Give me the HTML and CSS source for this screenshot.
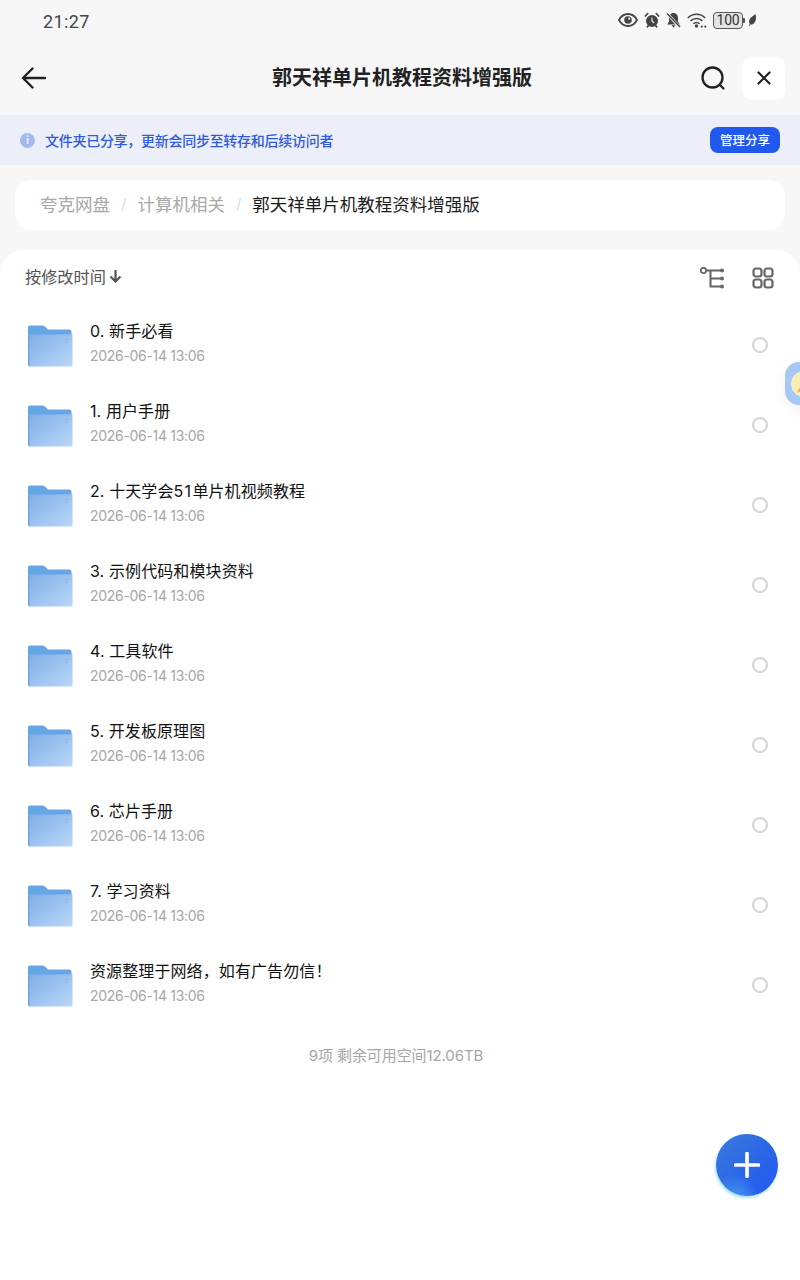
FILE: index.html
```html
<!DOCTYPE html>
<html lang="zh">
<head>
<meta charset="utf-8">
<title>郭天祥单片机教程资料增强版</title>
<link rel="stylesheet" href="styles.css">
</head>
<body>
<div class="app">
  <svg width="0" height="0" class="defs" aria-hidden="true">
    <defs>
      <linearGradient id="fb" x1="0" y1="0" x2="1" y2="1">
        <stop offset="0" stop-color="#7eaee6"/>
        <stop offset="1" stop-color="#bad7f9"/>
      </linearGradient>
      <symbol id="folder" viewBox="0 0 46 44">
        <path d="M1 4.500a2 2 0 0 1 2-2h12c1.500 0 2.500.5 3.500 1.500L21 6.500h21a2.500 2.500 0 0 1 2.500 2.500v6H1z" fill="#66a6e6"/>
        <path d="M38.500 8h2.500M38.500 10h2.500" stroke="#8fa9c6" stroke-width=".8" fill="none"/>
        <path d="M1 11.500h44.500V42a1.500 1.500 0 0 1-1.500 1.500H3A2 2 0 0 1 1 41.500z" fill="url(#fb)"/>
        <path d="M1 11.500h1.500v32H3a2 2 0 0 1-2-2z" fill="#6ea3df"/>
        <path d="M38 17h3M38 19.500h3" stroke="#8fb0d6" stroke-width=".8"/>
      </symbol>
    </defs>
  </svg>

  <header class="status">
    <span class="time">21:27</span>
    <div class="status-icons">
      <svg width="20" height="14" viewBox="0 0 20 14"><path d="M1 7c2-3.800 5.300-6 9-6s7 2.200 9 6c-2 3.800-5.300 6-9 6S3 10.800 1 7z" fill="none" stroke="#444" stroke-width="1.800"/><circle cx="10" cy="7" r="3.800" fill="#444"/><circle cx="11.300" cy="5.700" r="1.100" fill="#f7f7f7"/></svg>
      <svg width="16" height="16" viewBox="0 0 16 16"><circle cx="8" cy="9" r="6" fill="#444"/><path d="M8 5.500v3.700l2.200 1.500" stroke="#f7f7f7" stroke-width="1.100" fill="none"/><path d="M.8 4.500L4.200 1M15.200 4.500L11.800 1M2.800 15.300l1.700-1.700M13.200 15.300l-1.700-1.700" stroke="#444" stroke-width="1.700"/></svg>
      <svg width="15" height="16" viewBox="0 0 15 16"><path d="M7.500 1C4.500 1 3 3.500 3 6v3.500L1.200 12.500h12.600L12 9.500V6c0-2.500-1.500-5-4.500-5z" fill="#444"/><path d="M5.500 13.300h4L7.500 15.500z" fill="#444"/><path d="M1.500 2l12 13" stroke="#f7f7f7" stroke-width="2.800"/><path d="M1 1.500l13 13.500" stroke="#444" stroke-width="1.400"/></svg>
      <svg width="20" height="15" viewBox="0 0 20 15"><path d="M.8 5C3 2.800 6.100 1.300 9.500 1.300S16 2.800 18.200 5M3.600 7.900c1.500-1.500 3.600-2.500 5.900-2.500s4.400 1 5.900 2.500M6.400 10.700c.8-.8 1.900-1.300 3.100-1.300s2.300.5 3.100 1.300" fill="none" stroke="#444" stroke-width="1.500"/><circle cx="9.500" cy="13" r="1.700" fill="#444"/><circle cx="14.800" cy="13.600" r="1.100" fill="#444"/><circle cx="18.300" cy="13.600" r="1.100" fill="#444"/></svg>
      <span class="battery"><span class="battery-level">100</span></span>
      <span class="battery-tip"></span>
      <svg width="9" height="14" viewBox="0 0 9 13" class="leaf"><path d="M7.500.5c.8 3.500.8 6.500-1 8.800-1.200 1.500-2.700 2-4 1.700L1.500 12.500l-.7-.4 1-1.600C.3 8.300 1 5.500 3.500 3.500 5 2.400 6.500 1.500 7.500.5z" fill="#444"/></svg>
    </div>
  </header>

  <nav class="topbar">
    <button class="icon-btn back" aria-label="返回">
      <svg width="26" height="22" viewBox="0 0 26 22"><path d="M11.500 1.500L2 11l9.500 9.500M2.500 11H24" fill="none" stroke="#222" stroke-width="2.400" stroke-linecap="round" stroke-linejoin="round"/></svg>
    </button>
    <h1 class="title">郭天祥单片机教程资料增强版</h1>
    <div class="top-actions">
      <button class="icon-btn" aria-label="搜索">
        <svg width="26" height="26" viewBox="0 0 26 26"><circle cx="12.500" cy="12.500" r="10" fill="none" stroke="#222" stroke-width="2.300"/><path d="M20 20l3.500 3.500" stroke="#222" stroke-width="2.300" stroke-linecap="round"/></svg>
      </button>
      <button class="close-btn" aria-label="关闭">
        <svg width="14" height="14" viewBox="0 0 14 14"><path d="M1.500 1.500l11 11M12.500 1.500l-11 11" stroke="#222" stroke-width="2.200" stroke-linecap="round"/></svg>
      </button>
    </div>
  </nav>

  <section class="banner">
    <div class="banner-msg">
      <span class="info">i</span>
      <span class="banner-text">文件夹已分享，更新会同步至转存和后续访问者</span>
    </div>
    <button class="manage">管理分享</button>
  </section>

  <div class="crumbs">
    <span class="crumb">夸克网盘</span><span class="sep">/</span>
    <span class="crumb">计算机相关</span><span class="sep">/</span>
    <span class="crumb current">郭天祥单片机教程资料增强版</span>
  </div>

  <main class="panel">
    <div class="sortbar">
      <div class="sort">按修改时间
        <svg width="13" height="14" viewBox="0 0 13 14"><path d="M6.500 1v11M1.500 7.500l5 5 5-5" fill="none" stroke="#555" stroke-width="2.200"/></svg>
      </div>
      <div class="view-tools">
        <svg width="25" height="22" viewBox="0 0 25 22"><circle cx="3.500" cy="3.500" r="2.700" fill="none" stroke="#666" stroke-width="1.800"/><path d="M6.500 3.500H22M10.500 3.500v16H22M10.500 11.500H22" fill="none" stroke="#666" stroke-width="2.100"/><circle cx="22" cy="3.500" r="2" fill="#666"/><circle cx="22" cy="11.500" r="2" fill="#666"/><circle cx="22" cy="19.500" r="2" fill="#666"/></svg>
        <svg width="22" height="22" viewBox="0 0 22 22" class="grid-ic"><g fill="none" stroke="#666" stroke-width="2.200"><rect x="1.500" y="1.500" width="8" height="8" rx="2.500"/><rect x="12.500" y="1.500" width="8" height="8" rx="2.500"/><rect x="1.500" y="12.500" width="8" height="8" rx="2.500"/><rect x="12.500" y="12.500" width="8" height="8" rx="2.500"/></g></svg>
      </div>
    </div>

    <ul class="files">
      <li class="file"><svg class="folder"><use href="#folder"/></svg><div class="meta"><div class="name">0. 新手必看</div><div class="date">2026-06-14 13:06</div></div><span class="radio"></span></li>
      <li class="file"><svg class="folder"><use href="#folder"/></svg><div class="meta"><div class="name">1. 用户手册</div><div class="date">2026-06-14 13:06</div></div><span class="radio"></span></li>
      <li class="file"><svg class="folder"><use href="#folder"/></svg><div class="meta"><div class="name">2. 十天学会<span class="digits">51</span>单片机视频教程</div><div class="date">2026-06-14 13:06</div></div><span class="radio"></span></li>
      <li class="file"><svg class="folder"><use href="#folder"/></svg><div class="meta"><div class="name">3. 示例代码和模块资料</div><div class="date">2026-06-14 13:06</div></div><span class="radio"></span></li>
      <li class="file"><svg class="folder"><use href="#folder"/></svg><div class="meta"><div class="name">4. 工具软件</div><div class="date">2026-06-14 13:06</div></div><span class="radio"></span></li>
      <li class="file"><svg class="folder"><use href="#folder"/></svg><div class="meta"><div class="name">5. 开发板原理图</div><div class="date">2026-06-14 13:06</div></div><span class="radio"></span></li>
      <li class="file"><svg class="folder"><use href="#folder"/></svg><div class="meta"><div class="name">6. 芯片手册</div><div class="date">2026-06-14 13:06</div></div><span class="radio"></span></li>
      <li class="file"><svg class="folder"><use href="#folder"/></svg><div class="meta"><div class="name">7. 学习资料</div><div class="date">2026-06-14 13:06</div></div><span class="radio"></span></li>
      <li class="file"><svg class="folder"><use href="#folder"/></svg><div class="meta"><div class="name">资源整理于网络，如有广告勿信！</div><div class="date">2026-06-14 13:06</div></div><span class="radio"></span></li>
    </ul>
    <p class="summary">9项 剩余可用空间12.06TB</p>
  </main>

  <aside class="float-tab">
    <span class="float-badge">
      <svg width="26" height="26" viewBox="0 0 26 26"><path d="M17 6L7 18l-1.500 3.500L9 20 19 8z" fill="#e8b94a"/></svg>
    </span>
  </aside>
  <button class="fab" aria-label="新建">
    <svg width="26" height="26" viewBox="0 0 26 26"><path d="M13 1.500v23M1.500 13h23" stroke="#fff" stroke-width="3.600" stroke-linecap="round"/></svg>
  </button>
</div>
</body>
</html>
```
FILE: styles.css
```css
* { box-sizing: border-box; }
html, body { margin: 0; padding: 0; }
body {
  width: 800px;
  height: 1280px;
  overflow: hidden;
  background: #f7f7f7;
  font-family: Inter, "Noto Sans CJK SC", sans-serif;
  color: #222;
}
.app { position: relative; width: 800px; height: 1280px; overflow: hidden; display: flex; flex-direction: column; }
.defs { position: absolute; }
button { border: 0; background: none; padding: 0; font: inherit; display: flex; align-items: center; justify-content: center; }

.status { height: 42px; padding: 0 43px; display: flex; align-items: center; justify-content: space-between; }
.time { font-family: Roboto, sans-serif; font-size: 18px; color: #444; letter-spacing: .4px; }
.status-icons { display: flex; align-items: center; gap: 6px; padding-bottom: 2px; }
.battery { width: 30px; height: 17px; border: 1.500px solid #555; border-radius: 4px; display: flex; align-items: center; justify-content: center; background: #e4e4e4; }
.battery-level { font-family: Roboto, sans-serif; font-size: 14px; line-height: 1; color: #333; letter-spacing: -.2px; }
.battery-tip { width: 2px; height: 5px; background: #555; margin-left: -6px; border-radius: 0 1px 1px 0; }
.leaf { margin-left: -3px; }

.topbar { height: 72px; padding: 0 15px 0 21px; display: flex; align-items: center; justify-content: space-between; position: relative; }
.title { position: absolute; left: 4px; right: 0; margin: 0; text-align: center; font-size: 20px; font-weight: 700; color: #222; line-height: 28px; pointer-events: none; }
.top-actions { display: flex; align-items: center; gap: 16px; }
.close-btn { width: 43px; height: 43px; border-radius: 10px; background: #fff; }

.banner { height: 50px; margin-top: 1px; padding: 0 20px; background: #eceff7; display: flex; align-items: center; justify-content: space-between; }
.banner-msg { display: flex; align-items: center; gap: 10px; font-size: 14px; font-weight: 500; color: #2f5bdc; }
.banner-text { letter-spacing: -.28px; padding-bottom: 1px; }
.info { width: 15px; height: 15px; border-radius: 50%; background: #a3b8f0; color: #eceff7; font-size: 11px; line-height: 15px; text-align: center; font-weight: 700; }
.manage { width: 70px; height: 26px; padding-bottom: 2px; border-radius: 8px; background: #2158ee; color: #fff; font-size: 12.5px; font-weight: 500; }

.crumbs { margin: 15px 15px 0; height: 50px; padding: 0 25px 3px; background: #fff; border-radius: 16px; display: flex; align-items: center; font-size: 17.5px; }
.crumb { color: #a8a8a8; }
.crumb.current { color: #1c1c1c; }
.sep { color: #dcdcdc; font-size: 15px; margin: 0 11px; }

.panel { margin-top: 20px; flex: 1; background: #fff; border-radius: 24px 24px 0 0; }
.sortbar { height: 55px; padding: 0 26px 4px 25px; display: flex; align-items: center; justify-content: space-between; }
.sort { display: flex; align-items: center; gap: 3px; font-size: 16.2px; color: #555; }
.view-tools { display: flex; align-items: center; gap: 27px; margin-top: 4px; }
.grid-ic { margin-top: 1px; }

.files { list-style: none; margin: 0; padding: 0; }
.file { height: 80px; padding: 0 32px 0 27px; display: flex; align-items: center; }
.folder { width: 46px; height: 44px; flex: none; }
.meta { flex: 1; margin-left: 17px; display: flex; flex-direction: column; gap: 4px; margin-top: -4px; }
.name { font-size: 16px; line-height: 22px; letter-spacing: .1px; color: #111; }
.digits { letter-spacing: 1.300px; }
.date { font-size: 14px; line-height: 20px; letter-spacing: -.3px; color: #a6a6a6; }
.radio { width: 16px; height: 16px; border-radius: 50%; border: 2px solid #d6d6d6; background: #fff; }

.summary { margin: 21px 8px 0 0; text-align: center; font-size: 15px; line-height: 20px; letter-spacing: -.1px; color: #a6a6a6; }

.float-tab { position: absolute; left: 785px; top: 362px; width: 40px; height: 43px; border-radius: 14px; background: #a9c7f5; box-shadow: 0 4px 12px rgba(120, 120, 120, .12); display: flex; align-items: center; padding-left: 6px; }
.float-badge { width: 26px; height: 26px; border-radius: 50%; background: #f8eeb0; border: 1px solid #f4f4e4; display: flex; }
.fab { position: absolute; left: 716px; top: 1134px; width: 62px; height: 62px; border-radius: 50%; background: radial-gradient(circle at 30% 105%, rgba(79, 168, 240, .8) 0%, rgba(79, 168, 240, 0) 32%), linear-gradient(135deg, #3b7bdc 0%, #2a66e8 55%, #2257f5 100%); box-shadow: -1px 2px 3px rgba(90, 200, 250, .55); }
```
